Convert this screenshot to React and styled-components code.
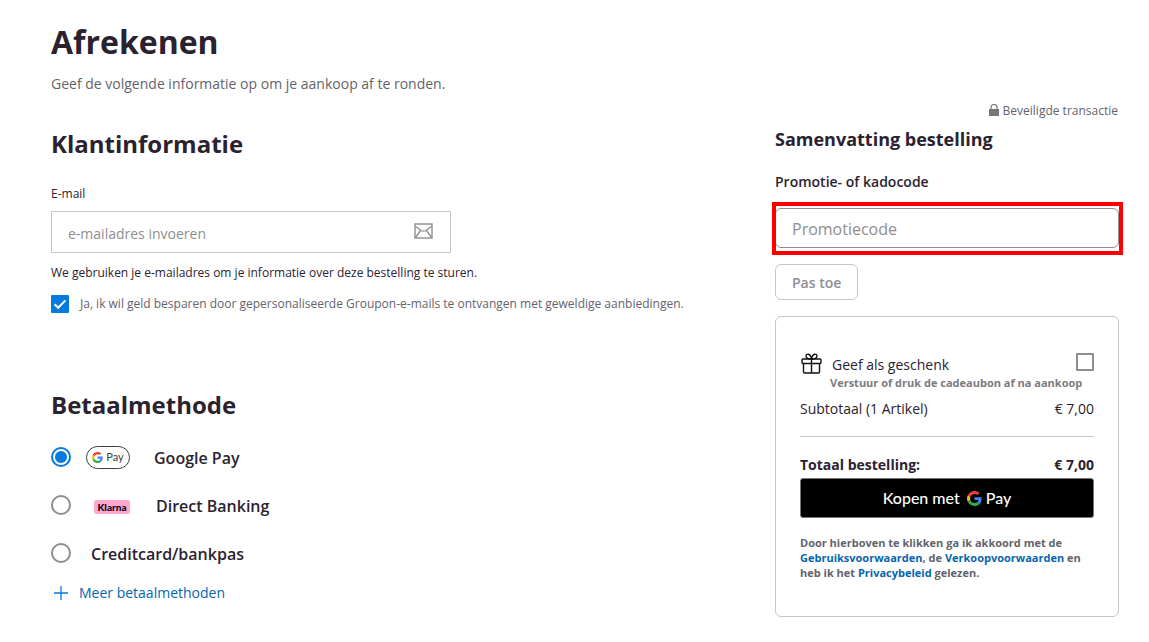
import React, { useState } from 'react';
import styled, { ThemeProvider, createGlobalStyle } from 'styled-components';

const theme = {
    black: '#2b2230',
    text: '#63636b',
    muted: '#8e8e92',
    line: '#c6c6c6',
    blue: '#0579dd',
    link: '#0565b0',
    fontFamily: '"Open Sans", "Noto Sans", sans-serif',
    logoFont: 'Lato, "Open Sans", sans-serif',
};

const GlobalStyle = createGlobalStyle`
    * {
        box-sizing: border-box;
    }

    body {
        margin: 0;
        background: #fff;
        color: ${props => props.theme.black};
        font-family: ${props => props.theme.fontFamily};
        font-size: 14px;
        line-height: 20px;
    }

    button, input {
        font-family: inherit;
    }
`;

const Page = styled.main`
    padding: 20px 30px 24px 51px;
`;

const Title = styled.h1`
    margin: 0;
    font-size: 32px;
    line-height: 44px;
    font-weight: 700;
`;

const Intro = styled.p`
    margin: 10px 0 9px;
    color: ${props => props.theme.text};
`;

const Columns = styled.div`
    display: flex;
    justify-content: space-between;
    gap: 40px;
`;

const Details = styled.div`
    flex: 1;
    padding-top: 25px;
`;

const Summary = styled.aside`
    flex: 0 0 30%;
    min-width: 344px;
    max-width: 344px;
`;

const SectionTitle = styled.h2`
    margin: 0;
    font-size: 24px;
    line-height: 32px;
    font-weight: 700;
`;

const FieldLabel = styled.label`
    display: block;
    margin: 26px 0 9px;
    font-size: 12px;
    line-height: 16px;
    font-weight: 500;
`;

const EmailField = styled.div`
    display: flex;
    align-items: center;
    max-width: 400px;
    height: 42px;
    padding: 0 17px 0 16px;
    border: 1px solid ${props => props.theme.line};
    border-radius: 1px;

    input {
        flex: 1;
        min-width: 0;
        padding: 2px 0 0;
        border: 0;
        outline: none;
        background: transparent;
        font-size: 14px;

        &::placeholder {
            color: ${props => props.theme.muted};
        }
    }

    svg {
        margin-bottom: 2px;
    }
`;

const Note = styled.p`
    margin: 12px 0 14px;
    font-size: 12px;
    line-height: 16px;
`;

const OptIn = styled.label`
    display: flex;
    align-items: center;
    gap: 11px;
    margin-bottom: 76px;
    color: ${props => props.theme.text};
    font-size: 12px;
    line-height: 16px;
`;

const Checkbox = styled.input.attrs({ type: 'checkbox' })`
    appearance: none;
    flex: none;
    width: 18px;
    height: 18px;
    margin: 0;
    border: 2px solid ${props => props.theme.muted};
    border-radius: 1px;

    &:checked {
        border-color: ${props => props.theme.blue};
        background: ${props => props.theme.blue} url("data:image/svg+xml,%3Csvg xmlns='http://www.w3.org/2000/svg' viewBox='0 0 14 14'%3E%3Cpath d='M1.6 7.2l3.6 3.6 7.2-7.4' fill='none' stroke='white' stroke-width='2'/%3E%3C/svg%3E") center / 14px no-repeat;
    }
`;

const Methods = styled.fieldset`
    margin: 12px 0 0;
    padding: 0;
    border: 0;
`;

const Method = styled.label`
    display: flex;
    align-items: center;
    height: 48px;
    font-size: 16px;
    line-height: 24px;
    font-weight: 600;
`;

const MethodName = styled.span`
    padding-top: 2px;
    margin-left: ${props => props.$gap}px;
`;

const Radio = styled.input.attrs({ type: 'radio' })`
    appearance: none;
    flex: none;
    width: 20px;
    height: 20px;
    margin: 0;
    border: 2px solid ${props => props.theme.muted};
    border-radius: 50%;

    &:checked {
        border-color: ${props => props.theme.blue};
        background: ${props => props.theme.blue};
        background-clip: content-box;
        padding: 2px;
    }
`;

const GPayBadge = styled.span`
    display: flex;
    align-items: center;
    justify-content: center;
    gap: 3px;
    width: 44px;
    height: 23px;
    margin-left: 15px;
    border: 1px solid #3c4043;
    border-radius: 12px;
    color: #3c4043;
    font-family: ${props => props.theme.logoFont};
    font-size: 11px;
    line-height: 12px;
    font-weight: 400;
`;

const KlarnaBadge = styled.span`
    width: 36px;
    margin: 4px 0 0 23px;
    border-radius: 3px;
    background: #ffa8cd;
    color: #0b051d;
    font-family: ${props => props.theme.logoFont};
    font-size: 10px;
    line-height: 14px;
    font-weight: 900;
    text-align: center;
`;

const MoreButton = styled.button`
    display: flex;
    align-items: center;
    gap: 11px;
    margin: 6px 0 0;
    padding: 0 3px;
    border: 0;
    background: none;
    color: ${props => props.theme.link};
    font-size: 14px;
    line-height: 20px;
    cursor: pointer;
`;

const Secure = styled.div`
    display: flex;
    align-items: center;
    justify-content: flex-end;
    gap: 4px;
    padding-right: 1px;
    color: ${props => props.theme.text};
    font-size: 12px;
    line-height: 16px;
`;

const SummaryTitle = styled.h2`
    margin: 8px 0 21px;
    font-size: 18px;
    line-height: 24px;
    font-weight: 700;
`;

const PromoLabel = styled.label`
    display: block;
    font-weight: 600;
`;

const PromoField = styled.div`
    position: relative;
    margin: 16px 0;

    &::after {
        content: '';
        position: absolute;
        inset: -6px -4px -7px -3px;
        border: 4px solid #fe0000;
        pointer-events: none;
    }

    input {
        display: block;
        width: 100%;
        height: 40px;
        padding: 2px 16px 0;
        border: 1px solid ${props => props.theme.muted};
        border-radius: 6px;
        outline: none;
        font-size: 16px;

        &::placeholder {
            color: ${props => props.theme.muted};
        }
    }
`;

const ApplyButton = styled.button`
    height: 36px;
    padding: 0 16px;
    border: 1px solid ${props => props.theme.line};
    border-radius: 6px;
    background: #fff;
    color: ${props => props.theme.muted};
    font-size: 14px;
    font-weight: 600;
`;

const Card = styled.section`
    margin-top: 16px;
    padding: 36px 24px;
    border: 1px solid ${props => props.theme.line};
    border-radius: 6px;
`;

const GiftRow = styled.label`
    display: flex;
    align-items: flex-start;

    svg {
        flex: none;
        margin-left: 1px;
    }

    span {
        flex: 1;
        margin-left: 10px;
        padding-top: 2px;
    }
`;

const GiftHint = styled.p`
    margin: 0 0 9px 30px;
    color: #7b7b80;
    font-size: 11px;
    line-height: 15px;
    font-weight: 700;
    white-space: nowrap;
`;

const AmountRow = styled.div`
    display: flex;
    justify-content: space-between;
    font-weight: ${props => props.$strong ? 700 : 400};
`;

const Divider = styled.hr`
    margin: 17px 0 18px;
    border: 0;
    border-top: 1px solid ${props => props.theme.line};
`;

const PayButton = styled.button`
    display: flex;
    align-items: center;
    justify-content: center;
    width: 100%;
    height: 40px;
    margin: 3px 0 17px;
    padding: 0;
    border: 1px solid #747775;
    border-radius: 3px;
    background: #000;
    color: #fff;
    font-family: ${props => props.theme.logoFont};
    font-size: 16px;
    line-height: 20px;
    font-weight: 500;
    cursor: pointer;

    svg {
        margin: 0 4px 0 7px;
    }
`;

const Terms = styled.p`
    margin: 0;
    color: ${props => props.theme.text};
    font-size: 11px;
    line-height: 15px;
    font-weight: 700;

    a {
        color: ${props => props.theme.link};
        text-decoration: none;
    }
`;

function GoogleIcon({ size }) {
    return <svg width={size} height={size} viewBox="0 0 48 48" aria-hidden="true">
        <path fill="#EA4335" d="M24 9.5c3.54 0 6.71 1.22 9.21 3.6l6.85-6.85C35.9 2.38 30.47 0 24 0 14.62 0 6.51 5.38 2.56 13.22l7.98 6.19C12.43 13.72 17.74 9.5 24 9.5z" />
        <path fill="#4285F4" d="M46.98 24.55c0-1.57-.15-3.09-.38-4.55H24v9.02h12.94c-.58 2.96-2.26 5.48-4.78 7.18l7.73 6c4.51-4.18 7.09-10.36 7.09-17.65z" />
        <path fill="#FBBC05" d="M10.53 28.59c-.48-1.45-.76-2.99-.76-4.59s.27-3.14.76-4.59l-7.98-6.19C.92 16.46 0 20.12 0 24s.92 7.54 2.56 10.78l7.97-6.19z" />
        <path fill="#34A853" d="M24 48c6.48 0 11.93-2.13 15.89-5.81l-7.73-6c-2.15 1.45-4.92 2.3-8.16 2.3-6.26 0-11.57-4.22-13.47-9.91l-7.98 6.19C6.51 42.62 14.62 48 24 48z" />
    </svg>
}

function MailIcon() {
    return <svg width="19" height="16" viewBox="0 0 19 16" fill="none" stroke="#8e8e92" aria-hidden="true">
        <rect x="1" y="1" width="17" height="14" strokeWidth="1.4" />
        <path d="M1.5 3.5L7 7.5q2.5 1.4 5 0l5.5-4M1.5 14.5L6.5 7.5M17.5 14.5L12.5 7.5" strokeWidth="1.3" />
    </svg>
}

function LockIcon() {
    return <svg width="10" height="14" viewBox="0 0 10 14" aria-hidden="true">
        <rect y="5" width="10" height="7" fill="#777" />
        <path d="M2 5.5v-2a3 3 0 0 1 6 0v2" fill="none" stroke="#777" strokeWidth="1.2" />
    </svg>
}

function GiftIcon() {
    return <svg width="21" height="21" viewBox="0 0 21 21" fill="none" stroke="#111" strokeWidth="1.4" aria-hidden="true">
        <rect x="1" y="6" width="19" height="4.5" rx="1" />
        <path d="M2.5 10.5V19q0 1 1 1h14q1 0 1-1v-8.500M10.5 6v14" />
        <path d="M10.5 6C6 6 5 4.600 5 3c0-2.600 4.500-3.200 5.500 3C11.500-.2 16 .4 16 3c0 1.600-1 3-5.500 3z" />
    </svg>
}

function PlusIcon() {
    return <svg width="14" height="14" viewBox="0 0 14 14" fill="none" stroke="#0579dd" strokeWidth="1.3" aria-hidden="true">
        <path d="M0 7h14M7 0v14" />
    </svg>
}

function App() {
    const [method, setMethod] = useState('google');
    const [optIn, setOptIn] = useState(true);

    const radioProps = value => ({
        name: 'method',
        value,
        checked: method === value,
        onChange: () => setMethod(value),
    });

    return <ThemeProvider theme={theme}>
        <GlobalStyle />
        <Page>
            <Title>Afrekenen</Title>
            <Intro>Geef de volgende informatie op om je aankoop af te ronden.</Intro>

            <Columns>
                <Details>
                    <SectionTitle>Klantinformatie</SectionTitle>
                    <FieldLabel htmlFor="email">E-mail</FieldLabel>
                    <EmailField>
                        <input id="email" type="email" placeholder="e-mailadres invoeren" />
                        <MailIcon />
                    </EmailField>
                    <Note>We gebruiken je e-mailadres om je informatie over deze bestelling te sturen.</Note>
                    <OptIn>
                        <Checkbox checked={optIn} onChange={() => setOptIn(!optIn)} />
                        Ja, ik wil geld besparen door gepersonaliseerde Groupon-e-mails te ontvangen met geweldige aanbiedingen.
                    </OptIn>

                    <SectionTitle id="methods">Betaalmethode</SectionTitle>
                    <Methods aria-labelledby="methods">
                        <Method>
                            <Radio {...radioProps('google')} />
                            <GPayBadge><GoogleIcon size={11} />Pay</GPayBadge>
                            <MethodName $gap={24}>Google Pay</MethodName>
                        </Method>
                        <Method>
                            <Radio {...radioProps('klarna')} />
                            <KlarnaBadge>Klarna</KlarnaBadge>
                            <MethodName $gap={26}>Direct Banking</MethodName>
                        </Method>
                        <Method>
                            <Radio {...radioProps('card')} />
                            <MethodName $gap={20}>Creditcard/bankpas</MethodName>
                        </Method>
                    </Methods>
                    <MoreButton type="button"><PlusIcon />Meer betaalmethoden</MoreButton>
                </Details>

                <Summary>
                    <Secure><LockIcon />Beveiligde transactie</Secure>
                    <SummaryTitle>Samenvatting bestelling</SummaryTitle>
                    <PromoLabel htmlFor="promo">Promotie- of kadocode</PromoLabel>
                    <PromoField>
                        <input id="promo" type="text" placeholder="Promotiecode" />
                    </PromoField>
                    <ApplyButton type="button">Pas toe</ApplyButton>

                    <Card>
                        <GiftRow>
                            <GiftIcon />
                            <span>Geef als geschenk</span>
                            <Checkbox />
                        </GiftRow>
                        <GiftHint>Verstuur of druk de cadeaubon af na aankoop</GiftHint>
                        <AmountRow><span>Subtotaal (1 Artikel)</span><span>€ 7,00</span></AmountRow>
                        <Divider />
                        <AmountRow $strong><span>Totaal bestelling:</span><span>€ 7,00</span></AmountRow>
                        <PayButton type="button">Kopen met <GoogleIcon size={15} />Pay</PayButton>
                        <Terms>
                            Door hierboven te klikken ga ik akkoord met de <a href="#gebruik">Gebruiksvoorwaarden</a>, de <a href="#verkoop">Verkoopvoorwaarden</a> en heb ik het <a href="#privacy">Privacybeleid</a> gelezen.
                        </Terms>
                    </Card>
                </Summary>
            </Columns>
        </Page>
    </ThemeProvider>
}

export default App;
